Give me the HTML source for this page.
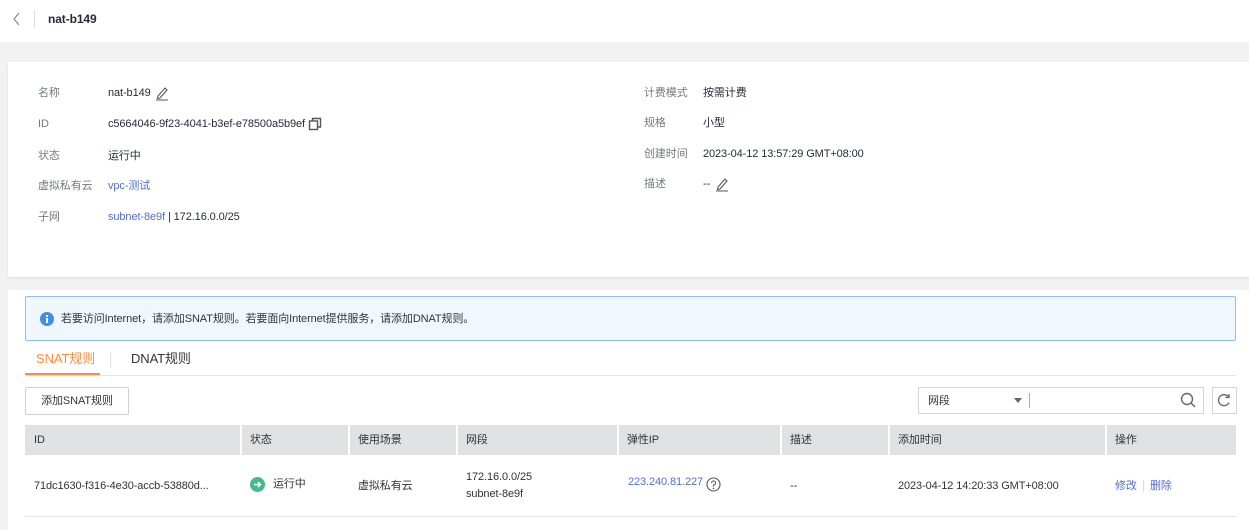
<!DOCTYPE html>
<html><head><meta charset="utf-8"><style>
*{box-sizing:border-box;margin:0;padding:0}
body{width:1249px;height:526px;overflow:hidden;background:#f2f2f2;font-family:"Liberation Sans","Noto Sans CJK SC",sans-serif;font-size:11px;line-height:14px;letter-spacing:-0.1px;color:#252b3a;position:relative}
.abs{position:absolute;white-space:nowrap}
.lbl{color:#75797f}
.link{color:#526ecc}
</style></head><body>
<div class="abs" style="left:0;top:0;width:1249px;height:42px;background:#fff"></div>
<svg class="abs" style="left:12px;top:12px" width="10" height="14"><path d="M7 1L2 7L7 13" stroke="#888" stroke-width="1.2" fill="none"/></svg>
<div class="abs" style="left:34px;top:10px;width:1px;height:18px;background:#ddd"></div>
<div class="abs" style="left:48px;top:12px;font-size:12px;font-weight:bold;color:#252b3a">nat-b149</div>

<div class="abs" style="left:8px;top:62px;width:1245px;height:215px;background:#fff;box-shadow:0 1px 3px rgba(0,0,0,.08)"></div>
<div class="abs lbl" style="left:38px;top:86px">名称</div>
<div class="abs" style="left:108px;top:86px">nat-b149</div>
<svg class="abs" style="left:155px;top:85px" width="14" height="16"><path d="M3 11L10 3L12 5L5 13L2.5 13.5Z" stroke="#555" fill="none" stroke-width="1.1"/><path d="M1 15H13" stroke="#555"/></svg>
<div class="abs lbl" style="left:38px;top:117px">ID</div>
<div class="abs" style="left:108px;top:117px">c5664046-9f23-4041-b3ef-e78500a5b9ef</div>
<svg class="abs" style="left:308px;top:117px" width="14" height="14"><rect x="1.5" y="4" width="8" height="8.5" stroke="#555" fill="none" stroke-width="1.4"/><path d="M4.5 4V1.5H12.5V10H9.5" stroke="#555" fill="none" stroke-width="1.4"/></svg>
<div class="abs lbl" style="left:38px;top:149px">状态</div>
<div class="abs" style="left:108px;top:149px">运行中</div>
<div class="abs lbl" style="left:38px;top:179px">虚拟私有云</div>
<div class="abs link" style="left:108px;top:179px">vpc-测试</div>
<div class="abs lbl" style="left:38px;top:210px">子网</div>
<div class="abs" style="left:108px;top:210px"><span class="link">subnet-8e9f</span> | 172.16.0.0/25</div>

<div class="abs lbl" style="left:644px;top:86px">计费模式</div>
<div class="abs" style="left:703px;top:86px">按需计费</div>
<div class="abs lbl" style="left:644px;top:116px">规格</div>
<div class="abs" style="left:703px;top:116px">小型</div>
<div class="abs lbl" style="left:644px;top:147px">创建时间</div>
<div class="abs" style="left:703px;top:147px">2023-04-12 13:57:29 GMT+08:00</div>
<div class="abs lbl" style="left:644px;top:177px">描述</div>
<div class="abs" style="left:703px;top:177px">--</div>
<svg class="abs" style="left:715px;top:176px" width="14" height="16"><path d="M3 11L10 3L12 5L5 13L2.5 13.5Z" stroke="#555" fill="none" stroke-width="1.1"/><path d="M1 15H13" stroke="#555"/></svg>

<div class="abs" style="left:8px;top:290px;width:1245px;height:240px;background:#fff"></div>
<div class="abs" style="left:25px;top:296px;width:1211px;height:45px;background:#f1f7fe;border:1px solid #8fbdf0;border-radius:2px"></div>
<svg class="abs" style="left:40px;top:312px" width="14" height="14"><circle cx="7" cy="7" r="7" fill="#3f8ee8"/><rect x="6" y="6" width="2" height="5" fill="#fff"/><rect x="6" y="3" width="2" height="2" fill="#fff"/></svg>
<div class="abs" style="left:61px;top:312px;color:#333">若要访问Internet，请添加SNAT规则。若要面向Internet提供服务，请添加DNAT规则。</div>

<div class="abs" style="left:36px;top:351px;font-size:13px;line-height:16px;color:#ff8c3a">SNAT规则</div>
<div class="abs" style="left:110px;top:352px;width:1px;height:16px;background:#e0e0e0"></div>
<div class="abs" style="left:131px;top:351px;font-size:13px;line-height:16px;color:#333">DNAT规则</div>
<div class="abs" style="left:25px;top:375px;width:1211px;height:1px;background:#e5e5e5"></div>
<div class="abs" style="left:25px;top:373px;width:75px;height:2px;background:#ff8c3a"></div>

<div class="abs" style="left:25px;top:387px;width:104px;height:28px;border:1px solid #d0d0d0;border-radius:2px;text-align:center;line-height:26px;color:#333">添加SNAT规则</div>

<div class="abs" style="left:918px;top:387px;width:286px;height:27px;border:1px solid #d5d5d5"></div>
<div class="abs" style="left:928px;top:394px;color:#333">网段</div>
<div class="abs" style="left:1014px;top:398px;width:0;height:0;border-left:4px solid transparent;border-right:4px solid transparent;border-top:5px solid #666"></div>
<div class="abs" style="left:1029px;top:393px;width:1px;height:15px;background:#aaa"></div>
<svg class="abs" style="left:1180px;top:392px" width="16" height="17"><circle cx="7" cy="7" r="5.5" stroke="#666" stroke-width="1.4" fill="none"/><path d="M11 11L15 15" stroke="#666" stroke-width="1.5"/></svg>
<div class="abs" style="left:1212px;top:387px;width:25px;height:27px;border:1px solid #d5d5d5"></div>
<svg class="abs" style="left:1217px;top:393px" width="14" height="14"><path d="M11.5 4A5.5 5.5 0 1 0 12 9.5" stroke="#666" stroke-width="1.3" fill="none"/><path d="M12 1V4.5H8.5" stroke="#666" stroke-width="1.3" fill="none"/></svg>

<div class="abs" style="left:25px;top:425px;width:1211px;height:30px;background:#dfe1e3"></div>
<div class="abs" style="left:25px;top:425px;width:1211px;height:30px;color:#333">
<span class="abs" style="left:9px;top:8px">ID</span>
<span class="abs" style="left:215px;top:0;width:2px;height:30px;background:#fff"></span>
<span class="abs" style="left:225px;top:8px">状态</span>
<span class="abs" style="left:323px;top:0;width:2px;height:30px;background:#fff"></span>
<span class="abs" style="left:333px;top:8px">使用场景</span>
<span class="abs" style="left:431px;top:0;width:2px;height:30px;background:#fff"></span>
<span class="abs" style="left:441px;top:8px">网段</span>
<span class="abs" style="left:592px;top:0;width:2px;height:30px;background:#fff"></span>
<span class="abs" style="left:602px;top:8px">弹性IP</span>
<span class="abs" style="left:755px;top:0;width:2px;height:30px;background:#fff"></span>
<span class="abs" style="left:765px;top:8px">描述</span>
<span class="abs" style="left:863px;top:0;width:2px;height:30px;background:#fff"></span>
<span class="abs" style="left:873px;top:8px">添加时间</span>
<span class="abs" style="left:1080px;top:0;width:2px;height:30px;background:#fff"></span>
<span class="abs" style="left:1090px;top:8px">操作</span>
</div>
<div class="abs" style="left:34px;top:479px;color:#333">71dc1630-f316-4e30-accb-53880d...</div>
<svg class="abs" style="left:250px;top:477px" width="15" height="15"><circle cx="7.5" cy="7.5" r="7.5" fill="#3dbd8a"/><path d="M4 7.5H10.5M8 5L10.5 7.5L8 10" stroke="#fff" stroke-width="1.5" fill="none"/></svg>
<div class="abs" style="left:273px;top:477px;color:#333">运行中</div>
<div class="abs" style="left:358px;top:479px;color:#333">虚拟私有云</div>
<div class="abs" style="left:466px;top:469px;color:#333;line-height:17px">172.16.0.0/25<br>subnet-8e9f</div>
<div class="abs link" style="left:628px;top:475px">223.240.81.227</div>
<svg class="abs" style="left:706px;top:477px" width="15" height="15"><circle cx="7.5" cy="7.5" r="6.5" stroke="#555" stroke-width="1.1" fill="none"/><path d="M5.5 6A2 2 0 1 1 7.5 8V9.5" stroke="#555" stroke-width="1.1" fill="none"/><circle cx="7.5" cy="11.3" r=".8" fill="#555"/></svg>
<div class="abs" style="left:790px;top:479px;color:#333">--</div>
<div class="abs" style="left:898px;top:479px;color:#333">2023-04-12 14:20:33 GMT+08:00</div>
<div class="abs link" style="left:1115px;top:479px">修改</div>
<div class="abs" style="left:1143px;top:480px;width:1px;height:12px;background:#ddd"></div>
<div class="abs link" style="left:1150px;top:479px">删除</div>
<div class="abs" style="left:25px;top:516px;width:1211px;height:1px;background:#e5e5e5"></div>
</body></html>
